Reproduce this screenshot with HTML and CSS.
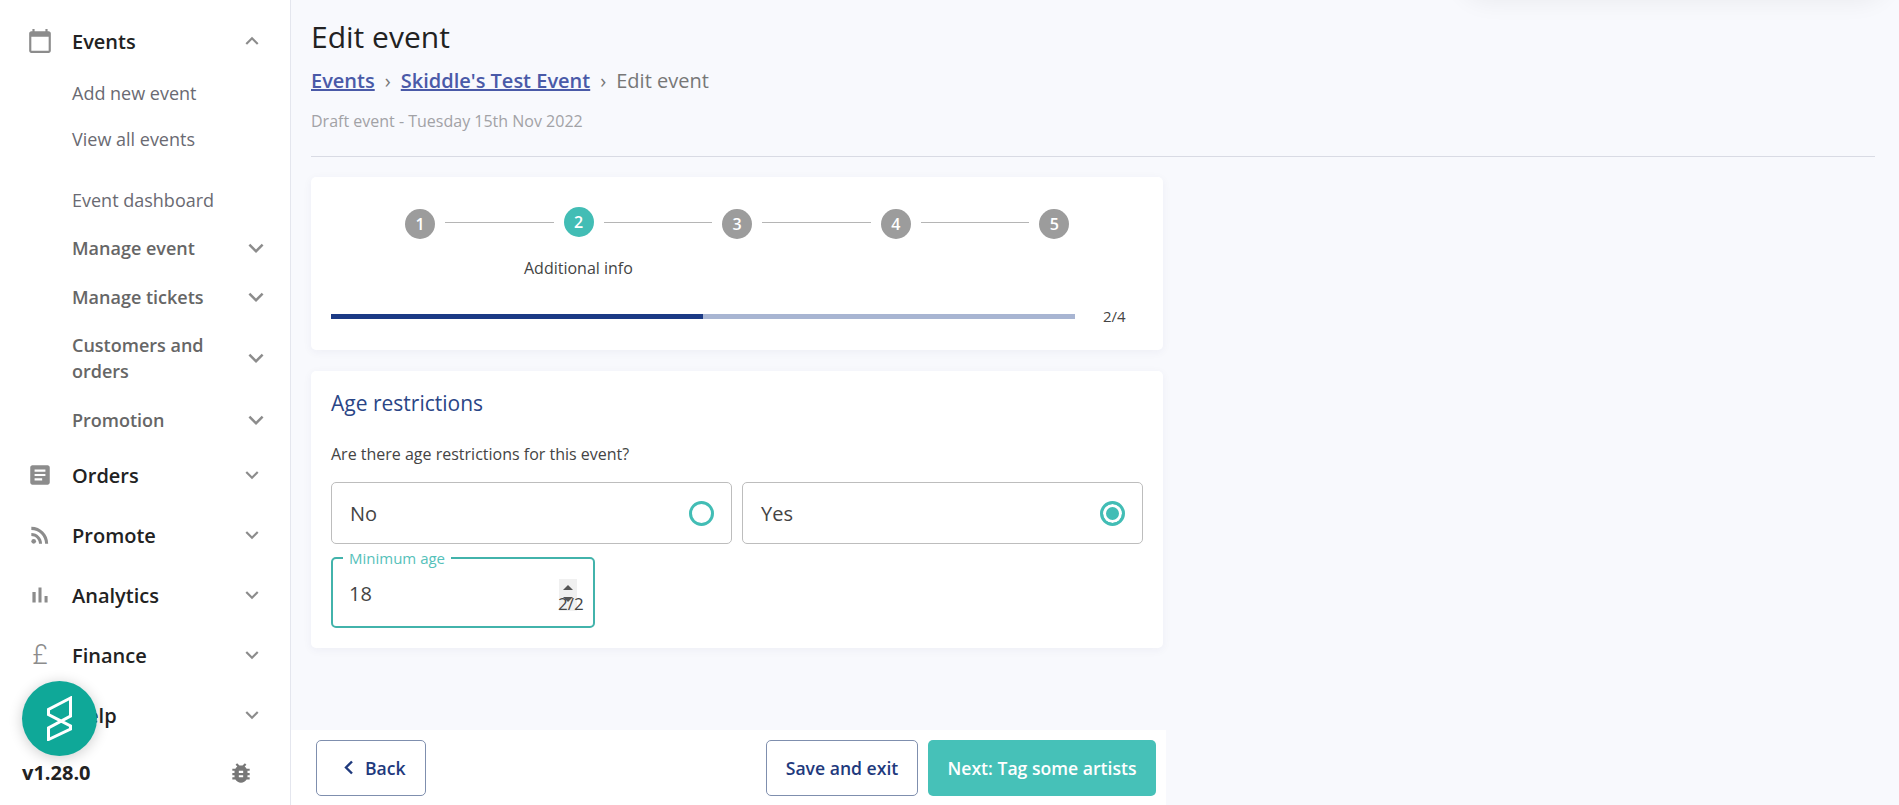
FILE: index.html
```html
<!DOCTYPE html>
<html>
<head>
    <meta charset="UTF-8">
    <title>Edit event</title>
    <link rel="stylesheet" href="styles.css">
</head>
<body>
    <svg class="defs" width="0" height="0">
        <symbol id="i-down" viewBox="0 0 24 24"><path d="M7.41 8.59 12 13.17l4.59-4.58L18 10l-6 6-6-6z"/></symbol>
        <symbol id="i-up" viewBox="0 0 24 24"><path d="M7.41 15.41 12 10.83l4.59 4.58L18 14l-6-6-6 6z"/></symbol>
    </svg>

    <div class="layout">
        <!-- Menu lateral -->
        <aside class="sidebar">
            <nav class="nav">
                <div class="nav-row">
                    <svg class="nav-icon" viewBox="0 0 24 24"><path d="M20 3h-1V1h-2v2H7V1H5v2H4c-1.1 0-2 .9-2 2v16c0 1.1.9 2 2 2h16c1.1 0 2-.9 2-2V5c0-1.1-.9-2-2-2zm0 18H4V8h16v13z"/></svg>
                    <span class="nav-label">Events</span>
                    <svg class="chev"><use href="#i-up"/></svg>
                </div>
                <a class="sub-link sub-first">Add new event</a>
                <a class="sub-link">View all events</a>
                <a class="sub-link sub-dash">Event dashboard</a>
                <div class="sub-row"><span>Manage event</span><svg class="chev-sub"><use href="#i-down"/></svg></div>
                <div class="sub-row"><span>Manage tickets</span><svg class="chev-sub"><use href="#i-down"/></svg></div>
                <div class="sub-row sub-tall"><span>Customers and<br>orders</span><svg class="chev-sub"><use href="#i-down"/></svg></div>
                <div class="sub-row sub-last"><span>Promotion</span><svg class="chev-sub"><use href="#i-down"/></svg></div>
                <div class="nav-row">
                    <svg class="nav-icon" viewBox="0 0 24 24"><path d="M19 3H5c-1.1 0-2 .9-2 2v14c0 1.1.9 2 2 2h14c1.1 0 2-.9 2-2V5c0-1.1-.9-2-2-2zm-5 14H7v-2h7v2zm3-4H7v-2h10v2zm0-4H7V7h10v2z"/></svg>
                    <span class="nav-label">Orders</span>
                    <svg class="chev"><use href="#i-down"/></svg>
                </div>
                <div class="nav-row">
                    <svg class="nav-icon" viewBox="0 0 24 24"><circle cx="6.18" cy="17.82" r="2.18"/><path d="M4 4.44v2.83c7.03 0 12.73 5.7 12.73 12.73h2.83c0-8.59-6.97-15.56-15.56-15.56zm0 5.66v2.83c3.9 0 7.07 3.17 7.07 7.07h2.83c0-5.47-4.43-9.9-9.9-9.9z"/></svg>
                    <span class="nav-label">Promote</span>
                    <svg class="chev"><use href="#i-down"/></svg>
                </div>
                <div class="nav-row">
                    <svg class="nav-icon" viewBox="0 0 24 24"><path d="M5 9.2h3V19H5zM10.6 5h2.8v14h-2.8zm5.6 8H19v6h-2.8z"/></svg>
                    <span class="nav-label">Analytics</span>
                    <svg class="chev"><use href="#i-down"/></svg>
                </div>
                <div class="nav-row">
                    <span class="nav-icon pound">£</span>
                    <span class="nav-label">Finance</span>
                    <svg class="chev"><use href="#i-down"/></svg>
                </div>
                <div class="nav-row">
                    <span class="nav-icon"></span>
                    <span class="nav-label">Help</span>
                    <svg class="chev"><use href="#i-down"/></svg>
                </div>
            </nav>
            <div class="version-row">
                <span class="version">v1.28.0</span>
                <svg class="bug" viewBox="0 0 24 24"><path d="M20 8h-2.81c-.45-.78-1.07-1.45-1.82-1.96L17 4.41 15.59 3l-2.17 2.17C12.96 5.06 12.49 5 12 5c-.49 0-.96.06-1.41.17L8.41 3 7 4.41l1.62 1.63C7.88 6.55 7.26 7.22 6.81 8H4v2h2.09c-.05.33-.09.66-.09 1v1H4v2h2v1c0 .34.04.67.09 1H4v2h2.81c1.04 1.79 2.97 3 5.19 3s4.15-1.21 5.19-3H20v-2h-2.09c.05-.33.09-.66.09-1v-1h2v-2h-2v-1c0-.34-.04-.67-.09-1H20V8zm-6 8h-4v-2h4v2zm0-4h-4v-2h4v2z"/></svg>
            </div>
            <div class="fab">
                <svg width="25" height="45" viewBox="0 0 25 45" fill="none" stroke="#fff" stroke-width="3">
                    <path d="M23.500 2 1.500 13.500v5L23.500 30v3L1.500 43.500V32L23.500 20z"/>
                </svg>
            </div>
        </aside>

        <main class="main">
            <div class="top-shadow"></div>
            <div class="content">
                <h1 class="title">Edit event</h1>
                <div class="crumbs">
                    <a class="crumb-link">Events</a>
                    <span class="crumb-sep">›</span>
                    <a class="crumb-link">Skiddle's Test Event</a>
                    <span class="crumb-sep">›</span>
                    <span class="crumb-now">Edit event</span>
                </div>
                <div class="draft">Draft event - Tuesday 15th Nov 2022</div>
                <hr class="rule">

                <section class="card card-steps">
                    <div class="steps">
                        <span class="step-num">1</span>
                        <span class="step-line"></span>
                        <span class="step-num step-on">2</span>
                        <span class="step-line"></span>
                        <span class="step-num">3</span>
                        <span class="step-line"></span>
                        <span class="step-num">4</span>
                        <span class="step-line"></span>
                        <span class="step-num">5</span>
                    </div>
                    <div class="step-label">Additional info</div>
                    <div class="progress">
                        <div class="progress-bar"><div class="progress-fill"></div></div>
                        <span class="progress-text">2/4</span>
                    </div>
                </section>

                <section class="card card-form">
                    <h2 class="card-title">Age restrictions</h2>
                    <p class="question">Are there age restrictions for this event?</p>
                    <div class="options">
                        <label class="option"><span>No</span><span class="radio"></span></label>
                        <label class="option"><span>Yes</span><span class="radio radio-on"></span></label>
                    </div>
                    <fieldset class="age-field">
                        <legend>Minimum age</legend>
                        <span class="age-value">18</span>
                        <span class="spinner"><span class="spin-up"></span><span class="spin-down"></span></span>
                        <span class="age-count">2/2</span>
                    </fieldset>
                </section>
            </div>

            <div class="actions">
                <button class="btn btn-back">
                    <svg width="10" height="15" viewBox="0 0 10 15" fill="none" stroke="#1f3a7d" stroke-width="2.400"><path d="M8 1.500 2 7.500l6 6"/></svg>
                    Back
                </button>
                <div class="actions-right">
                    <button class="btn btn-save">Save and exit</button>
                    <button class="btn btn-next">Next: Tag some artists</button>
                </div>
            </div>
        </main>
    </div>
</body>
</html>
```

FILE: styles.css
```css
/* Estructura general */
* {
    box-sizing: border-box;
}

html, body {
    height: 100%;
    margin: 0;
    overflow: hidden;
}

body {
    font-family: "Open Sans", Arial, sans-serif;
    background-color: #f8f9fd;
    color: #333;
}

.defs {
    position: absolute;
}

.layout {
    display: flex;
    height: 805px;
}

/* Menu lateral */
.sidebar {
    position: relative;
    width: 291px;
    flex-shrink: 0;
    background-color: #fff;
    border-right: 1px solid #e4e6ee;
    padding-top: 11px;
}

.nav-row {
    display: flex;
    align-items: center;
    height: 60px;
    padding-left: 27px;
}

.nav-icon {
    width: 26px;
    height: 26px;
    fill: #8c8c8c;
    flex-shrink: 0;
}

.pound {
    font-family: Roboto, sans-serif;
    font-size: 27px;
    line-height: 26px;
    font-weight: 300;
    color: #8c8c8c;
    text-align: center;
}

.nav-label {
    margin-left: 19px;
    flex: 1;
    font-size: 20px;
    font-weight: 600;
    color: #222;
}

.chev {
    width: 26px;
    height: 26px;
    margin-right: 25px;
    fill: #8c8c8c;
}

.sub-link {
    display: block;
    height: 46px;
    line-height: 46px;
    padding-left: 72px;
    font-size: 18px;
    color: #6a6a72;
}

.sub-first {
    margin-top: -1px;
}

.sub-dash {
    margin-top: 15px;
}

.sub-row {
    display: flex;
    align-items: center;
    justify-content: space-between;
    height: 49px;
    padding-left: 72px;
    padding-right: 19px;
    font-size: 18px;
    font-weight: 600;
    line-height: 26px;
    color: #666;
}

.sub-tall {
    height: 74px;
}

.sub-last {
    height: 50px;
}

.chev-sub {
    width: 30px;
    height: 30px;
    fill: #8c8c8c;
}

.version-row {
    display: flex;
    align-items: center;
    justify-content: space-between;
    padding: 0 36px 0 22px;
    margin-top: 14px;
}

.version {
    font-size: 20px;
    font-weight: 700;
    color: #222;
}

.bug {
    width: 26px;
    height: 26px;
    fill: #777;
}

.fab {
    position: absolute;
    left: 22px;
    top: 681px;
    width: 75px;
    height: 75px;
    border-radius: 50%;
    background-color: #0fa898;
    box-shadow: 0 2px 14px rgba(0, 0, 0, 0.2);
    display: flex;
    align-items: center;
    justify-content: center;
}

/* Contenido principal */
.main {
    position: relative;
    flex: 1;
    display: flex;
    flex-direction: column;
    min-width: 0;
}

.top-shadow {
    position: absolute;
    top: -60px;
    right: 10px;
    width: 430px;
    height: 60px;
    border-radius: 30px;
    box-shadow: 0 2px 25px rgba(0, 0, 0, 0.06);
}

.content {
    flex: 1;
    padding: 0 24px 0 20px;
}

.title {
    margin: 15px 0 0;
    font-size: 30px;
    font-weight: 400;
    line-height: 44px;
    color: #222;
}

.crumbs {
    display: flex;
    align-items: center;
    gap: 10px;
    margin-top: 3px;
    font-size: 20px;
    line-height: 38px;
}

.crumb-link {
    color: #4a5aa8;
    font-weight: 600;
    text-decoration: underline;
}

.crumb-sep,
.crumb-now {
    color: #777;
}

.draft {
    margin-top: 10px;
    font-size: 16px;
    line-height: 22px;
    color: #a2a2a6;
}

.rule {
    margin: 24px 0 20px;
    border: 0;
    border-top: 1px solid #d9dbe4;
}

.card {
    width: 852px;
    background-color: #fff;
    border-radius: 5px;
    box-shadow: 0 2px 10px rgba(30, 40, 90, 0.05);
    padding: 0 20px;
}

.card-steps {
    height: 173px;
    padding-top: 32px;
}

.steps {
    display: flex;
    align-items: center;
    padding-left: 74px;
    width: 812px;
}

.step-num {
    width: 30px;
    height: 30px;
    flex-shrink: 0;
    border-radius: 50%;
    background-color: #9c9c9c;
    color: #fff;
    font-size: 16px;
    font-weight: 600;
    line-height: 30px;
    text-align: center;
}

.step-on {
    background-color: #42bdb5;
    transform: translateY(-2px);
}

.step-line {
    width: 108.6px;
    height: 1px;
    margin: -4px 10px 0;
    background-color: #b5b5b5;
}

.step-label {
    margin-top: 17px;
    padding-left: 193px;
    font-size: 16px;
    line-height: 24px;
    color: #444;
}

.progress {
    display: flex;
    align-items: center;
    margin-top: 26px;
}

.progress-bar {
    width: 744px;
    height: 5px;
    background-color: #a8b5d2;
}

.progress-fill {
    width: 372px;
    height: 5px;
    background-color: #1b3a85;
}

.progress-text {
    margin-left: 28px;
    font-size: 15px;
    color: #444;
}

.card-form {
    height: 277px;
    margin-top: 21px;
    padding-top: 17px;
}

.card-title {
    margin: 0;
    font-size: 21px;
    font-weight: 400;
    line-height: 30px;
    color: #2a4586;
}

.question {
    margin: 25px 0 0;
    font-size: 16px;
    line-height: 22px;
    color: #444;
}

.options {
    display: flex;
    gap: 10px;
    margin-top: 17px;
}

.option {
    flex: 1;
    height: 62px;
    display: flex;
    align-items: center;
    justify-content: space-between;
    padding: 0 17px 0 18px;
    border: 1px solid #bdbdbd;
    border-radius: 5px;
    font-size: 20px;
    color: #444;
}

.radio {
    width: 25px;
    height: 25px;
    border: 3px solid #42bdb5;
    border-radius: 50%;
    background-color: #fff;
}

.radio-on {
    background-color: #42bdb5;
    box-shadow: inset 0 0 0 3px #fff;
}

.age-field {
    position: relative;
    width: 264px;
    height: 78px;
    margin: 6px 0 0;
    padding: 0 16px;
    border: 2px solid #42b3ab;
    border-radius: 5px;
}

.age-field legend {
    padding: 0 6px;
    margin-left: -6px;
    font-size: 15px;
    line-height: 16px;
    color: #55c1ba;
}

.age-value {
    display: block;
    margin-top: 14px;
    font-size: 20px;
    line-height: 28px;
    color: #444;
}

.spinner {
    position: absolute;
    left: 226px;
    top: 13px;
    width: 18px;
    height: 32px;
    background-color: #f0f0f0;
}

.spin-up,
.spin-down {
    position: absolute;
    left: 4px;
    border-left: 5px solid transparent;
    border-right: 5px solid transparent;
}

.spin-up {
    top: 6px;
    border-bottom: 5px solid #555;
}

.spin-down {
    top: 18px;
    border-top: 5px solid #555;
}

.age-count {
    position: absolute;
    left: 225px;
    top: 26px;
    font-size: 17px;
    line-height: 24px;
    color: #444;
}

/* Barra de botones */
.actions {
    width: 875px;
    height: 75px;
    flex-shrink: 0;
    background-color: #fff;
    display: flex;
    justify-content: space-between;
    padding: 10px 10px 9px 25px;
}

.actions-right {
    display: flex;
    gap: 10px;
}

.btn {
    height: 56px;
    border: 1px solid #7f8fae;
    border-radius: 5px;
    background-color: #fff;
    color: #1f3a7d;
    font-family: "Open Sans", Arial, sans-serif;
    font-size: 17.6px;
    font-weight: 600;
    cursor: pointer;
}

.btn-back {
    width: 110px;
    padding-left: 14px;
}

.btn-back svg {
    margin-right: 6px;
}

.btn-save {
    width: 152px;
}

.btn-next {
    width: 228px;
    border: none;
    background-color: #46c1b8;
    color: #fff;
}
```
